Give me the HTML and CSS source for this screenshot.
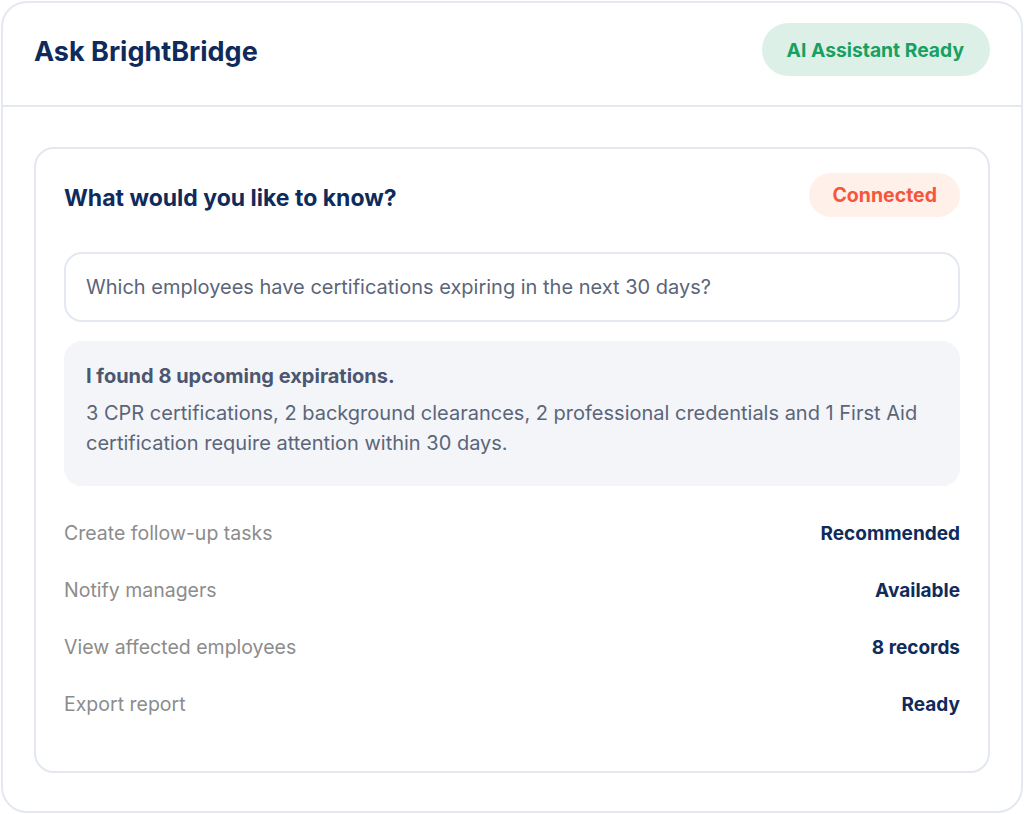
FILE: index.html
```html
<!DOCTYPE html>
<html lang="en">
<head>
<meta charset="utf-8">
<title>Ask BrightBridge</title>
<link rel="stylesheet" href="styles.css">
</head>
<body>
  <section class="panel">
    <header class="panel-head">
      <h1 class="panel-title">Ask BrightBridge</h1>
      <span class="pill pill-green">AI Assistant Ready</span>
    </header>
    <div class="panel-body">
      <div class="ask-card">
        <div class="ask-head">
          <h2 class="ask-title">What would you like to know?</h2>
          <span class="pill pill-coral">Connected</span>
        </div>
        <div class="query">Which employees have certifications expiring in the next 30 days?</div>
        <div class="answer">
          <p class="answer-lead">I found 8 upcoming expirations.</p>
          <p class="answer-text">3 CPR certifications, 2 background clearances, 2 professional credentials and 1 First Aid certification require attention within 30 days.</p>
        </div>
        <ul class="actions">
          <li class="action"><span class="action-label">Create follow-up tasks</span><span class="action-value">Recommended</span></li>
          <li class="action"><span class="action-label">Notify managers</span><span class="action-value">Available</span></li>
          <li class="action"><span class="action-label">View affected employees</span><span class="action-value">8 records</span></li>
          <li class="action"><span class="action-label">Export report</span><span class="action-value">Ready</span></li>
        </ul>
      </div>
    </div>
  </section>
</body>
</html>
```
FILE: styles.css
```css
* {
  box-sizing: border-box;
}

html, body {
  margin: 0;
  background: #ffffff;
}

body {
  padding: 1px;
  font-family: Inter, "Noto Sans", "Liberation Sans", sans-serif;
  color: #102a56;
}

.panel {
  height: 812px;
  border: 2px solid #e3e8f1;
  border-radius: 26px;
  background: #ffffff;
  display: flex;
  flex-direction: column;
}

.panel-head {
  display: flex;
  align-items: center;
  justify-content: space-between;
  padding: 20px 31px 29px 31px;
  border-bottom: 2px solid #e3e8f1;
}

.panel-title {
  margin: 0;
  font-size: 27px;
  line-height: 34px;
  font-weight: 700;
  color: #0f2b5b;
  position: relative;
  top: 2px;
}

.pill {
  display: inline-flex;
  align-items: center;
  border-radius: 999px;
  font-weight: 700;
}

.pill-green {
  height: 53px;
  padding: 0 26px 0 25px;
  background: #dcf0e7;
  color: #17a062;
  font-size: 19.3px;
}

.pill-coral {
  height: 44px;
  padding: 0 23px;
  background: #fff0ea;
  color: #f5573d;
  font-size: 19.5px;
  font-weight: 650;
}

.panel-body {
  padding: 40px 31px 39px 31px;
  flex: 1;
  display: flex;
}

.ask-card {
  flex: 1;
  border: 2px solid #e3e8f1;
  border-radius: 20px;
  padding: 24px 28px 38px 28px;
}

.ask-head {
  display: flex;
  align-items: center;
  justify-content: space-between;
}

.ask-title {
  margin: 0;
  font-size: 23px;
  line-height: 30px;
  font-weight: 700;
  color: #0f2b5b;
  position: relative;
  top: 3px;
}

.query {
  margin-top: 35px;
  height: 70px;
  border: 2px solid #e3e8f1;
  border-radius: 18px;
  padding: 0 20px;
  display: flex;
  align-items: center;
  font-size: 20px;
  color: #5b6579;
}

.answer {
  margin-top: 19px;
  background: #f3f5f9;
  border-radius: 18px;
  padding: 21px 22px 28px 22px;
}

.answer p {
  margin: 0;
}

.answer-lead {
  font-size: 20px;
  line-height: 28px;
  font-weight: 700;
  color: #4b5670;
}

.answer-text {
  margin-top: 8px !important;
  font-size: 20px;
  line-height: 30px;
  color: #5b6579;
}

.actions {
  list-style: none;
  margin: 19px 0 0 0;
  padding: 0;
}

.action {
  display: flex;
  justify-content: space-between;
  align-items: center;
  padding: 15px 0;
  line-height: 27px;
}

.action-label {
  font-size: 19.5px;
  color: #8c8c8c;
}

.action-value {
  font-size: 19px;
  font-weight: 700;
  color: #0f2b5b;
}
```
